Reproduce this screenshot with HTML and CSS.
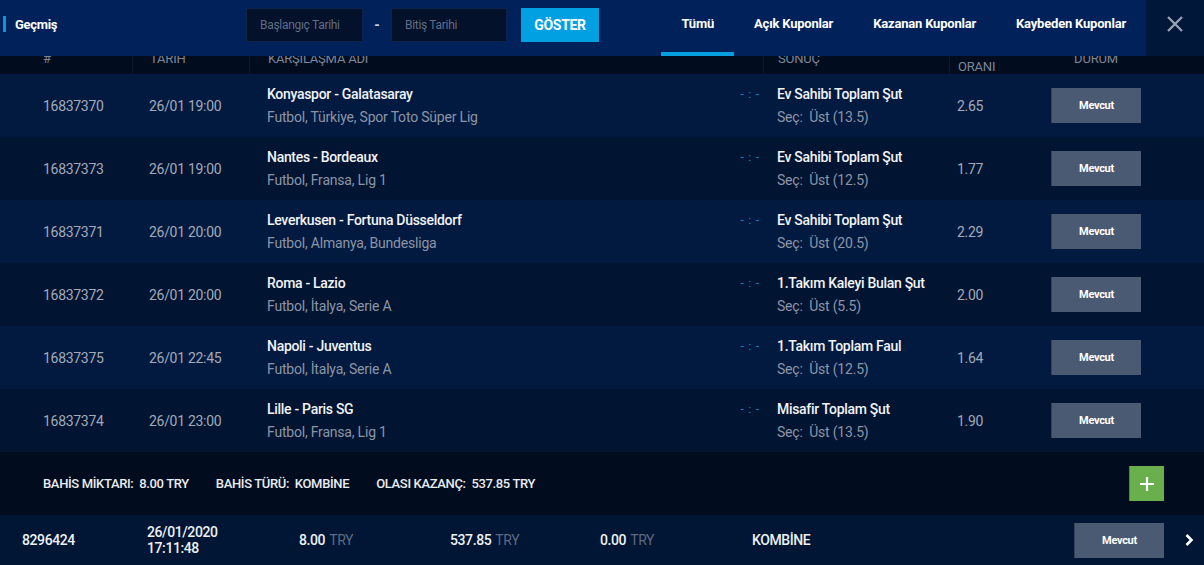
FILE: index.html
```html
<!DOCTYPE html>
<html lang="tr">
<head>
<meta charset="utf-8">
<title>Geçmiş</title>
<link rel="stylesheet" href="styles.css">
</head>
<body>
<div class="page">
  <header class="topbar">
    <div class="title"><span class="accent"></span><span class="title-text">Geçmiş</span></div>
    <div class="filter">
      <input class="date-input" type="text" placeholder="Başlangıç Tarihi">
      <span class="dash">-</span>
      <input class="date-input" type="text" placeholder="Bitiş Tarihi">
      <button class="btn-show">GÖSTER</button>
    </div>
    <nav class="tabs">
      <a class="tab active">Tümü</a>
      <a class="tab">Açık Kuponlar</a>
      <a class="tab">Kazanan Kuponlar</a>
      <a class="tab">Kaybeden Kuponlar</a>
    </nav>
    <button class="close" aria-label="Kapat">
      <svg width="18" height="18" viewBox="0 0 18 18"><path d="M2 2 L16 16 M16 2 L2 16" stroke="#9aa2b1" stroke-width="2.3" fill="none"/></svg>
    </button>
  </header>

  <section class="table">
    <div class="row head">
      <div class="cell c-id">#</div>
      <div class="cell c-date sep">TARİH</div>
      <div class="cell c-match sep">KARŞILAŞMA ADI</div>
      <div class="cell c-res sep">SONUÇ</div>
      <div class="cell c-odd sep"><span>BAHİS<br>ORANI</span></div>
      <div class="cell c-stat">DURUM</div>
      <div class="cell"></div>
    </div>

    <div class="row odd">
      <div class="cell c-id num">16837370</div>
      <div class="cell c-date num">26/01 19:00</div>
      <div class="cell c-match"><div class="two"><div class="main">Konyaspor - Galatasaray</div><div class="sub">Futbol, Türkiye, Spor Toto Süper Lig</div></div><span class="score">- : -</span></div>
      <div class="cell c-res"><div class="two"><div class="main">Ev Sahibi Toplam Şut</div><div class="sub">Seç:&nbsp; Üst (13.5)</div></div></div>
      <div class="cell c-odd num">2.65</div>
      <div class="cell c-stat"><button class="btn-status">Mevcut</button></div>
      <div class="cell"></div>
    </div>

    <div class="row even">
      <div class="cell c-id num">16837373</div>
      <div class="cell c-date num">26/01 19:00</div>
      <div class="cell c-match"><div class="two"><div class="main">Nantes - Bordeaux</div><div class="sub">Futbol, Fransa, Lig 1</div></div><span class="score">- : -</span></div>
      <div class="cell c-res"><div class="two"><div class="main">Ev Sahibi Toplam Şut</div><div class="sub">Seç:&nbsp; Üst (12.5)</div></div></div>
      <div class="cell c-odd num">1.77</div>
      <div class="cell c-stat"><button class="btn-status">Mevcut</button></div>
      <div class="cell"></div>
    </div>

    <div class="row odd">
      <div class="cell c-id num">16837371</div>
      <div class="cell c-date num">26/01 20:00</div>
      <div class="cell c-match"><div class="two"><div class="main">Leverkusen - Fortuna Düsseldorf</div><div class="sub">Futbol, Almanya, Bundesliga</div></div><span class="score">- : -</span></div>
      <div class="cell c-res"><div class="two"><div class="main">Ev Sahibi Toplam Şut</div><div class="sub">Seç:&nbsp; Üst (20.5)</div></div></div>
      <div class="cell c-odd num">2.29</div>
      <div class="cell c-stat"><button class="btn-status">Mevcut</button></div>
      <div class="cell"></div>
    </div>

    <div class="row even">
      <div class="cell c-id num">16837372</div>
      <div class="cell c-date num">26/01 20:00</div>
      <div class="cell c-match"><div class="two"><div class="main">Roma - Lazio</div><div class="sub">Futbol, İtalya, Serie A</div></div><span class="score">- : -</span></div>
      <div class="cell c-res"><div class="two"><div class="main">1.Takım Kaleyi Bulan Şut</div><div class="sub">Seç:&nbsp; Üst (5.5)</div></div></div>
      <div class="cell c-odd num">2.00</div>
      <div class="cell c-stat"><button class="btn-status">Mevcut</button></div>
      <div class="cell"></div>
    </div>

    <div class="row odd">
      <div class="cell c-id num">16837375</div>
      <div class="cell c-date num">26/01 22:45</div>
      <div class="cell c-match"><div class="two"><div class="main">Napoli - Juventus</div><div class="sub">Futbol, İtalya, Serie A</div></div><span class="score">- : -</span></div>
      <div class="cell c-res"><div class="two"><div class="main">1.Takım Toplam Faul</div><div class="sub">Seç:&nbsp; Üst (12.5)</div></div></div>
      <div class="cell c-odd num">1.64</div>
      <div class="cell c-stat"><button class="btn-status">Mevcut</button></div>
      <div class="cell"></div>
    </div>

    <div class="row even">
      <div class="cell c-id num">16837374</div>
      <div class="cell c-date num">26/01 23:00</div>
      <div class="cell c-match"><div class="two"><div class="main">Lille - Paris SG</div><div class="sub">Futbol, Fransa, Lig 1</div></div><span class="score">- : -</span></div>
      <div class="cell c-res"><div class="two"><div class="main">Misafir Toplam Şut</div><div class="sub">Seç:&nbsp; Üst (13.5)</div></div></div>
      <div class="cell c-odd num">1.90</div>
      <div class="cell c-stat"><button class="btn-status">Mevcut</button></div>
      <div class="cell"></div>
    </div>
  </section>

  <div class="summary">
    <div class="sum-items">
      <span class="sum-item">BAHİS MİKTARI:&nbsp; 8.00 TRY</span>
      <span class="sum-item">BAHİS TÜRÜ:&nbsp; KOMBİNE</span>
      <span class="sum-item">OLASI KAZANÇ:&nbsp; 537.85 TRY</span>
    </div>
    <button class="btn-plus" aria-label="Ekle">
      <svg width="16" height="16" viewBox="0 0 16 16"><path d="M8 1 V15 M1 8 H15" stroke="#ffffff" stroke-width="2.2" fill="none"/></svg>
    </button>
  </div>

  <div class="coupon">
    <div class="k-cell k-id">8296424</div>
    <div class="k-cell k-date">26/01/2020<br>17:11:48</div>
    <div class="k-cell">8.00 <span class="cur">TRY</span></div>
    <div class="k-cell">537.85 <span class="cur">TRY</span></div>
    <div class="k-cell">0.00 <span class="cur">TRY</span></div>
    <div class="k-cell">KOMBİNE</div>
    <div class="k-cell k-btn"><button class="btn-status">Mevcut</button></div>
    <div class="k-cell k-arrow">
      <svg width="10" height="14" viewBox="0 0 10 14"><path d="M2.5 2 L7.5 7 L2.5 12" stroke="#ffffff" stroke-width="2.6" fill="none"/></svg>
    </div>
  </div>
</div>
</body>
</html>
```

FILE: styles.css
```css
* { box-sizing: border-box; }

html, body {
  margin: 0;
  padding: 0;
}

body {
  width: 1204px;
  height: 565px;
  overflow: hidden;
  background: #011535;
  font-family: Roboto, "Liberation Sans", Arial, sans-serif;
  color: #eef1f5;
}

.page {
  display: flex;
  flex-direction: column;
}

/* ---------- top bar ---------- */
.topbar {
  display: flex;
  align-items: flex-start;
  flex: 0 0 56px;
  height: 56px;
  background: #00215a;
}

.title {
  flex: 0 0 246px;
  display: flex;
  align-items: center;
  height: 48px;
}

.accent {
  width: 3px;
  height: 16px;
  margin-left: 3px;
  background: #0a95dc;
}

.title-text {
  margin-left: 9px;
  font-size: 13px;
  font-weight: 700;
  letter-spacing: -0.3px;
  color: #ffffff;
}

.filter {
  display: flex;
  align-items: center;
  margin-top: 8px;
}

.date-input {
  width: 117px;
  height: 34px;
  padding: 0 0 0 13px;
  border: 1px solid #0e2348;
  background: #03112a;
  color: #c0c7d3;
  font-family: inherit;
  font-size: 12px;
  letter-spacing: -0.3px;
  outline: none;
}

.date-input + .dash + .date-input { width: 116px; }

.date-input::placeholder { color: #5f6d88; }

.dash {
  width: 28px;
  text-align: center;
  font-size: 14px;
  font-weight: 700;
  color: #d3d8e0;
}

.btn-show {
  width: 78px;
  height: 34px;
  margin-left: 14px;
  border: 0;
  background: #01a0e2;
  color: #ffffff;
  font-family: inherit;
  font-size: 14px;
  font-weight: 700;
  letter-spacing: -0.3px;
}

.tabs {
  display: flex;
  margin-left: auto;
}

.tab {
  display: block;
  height: 56px;
  padding: 0 20px 4px;
  line-height: 48px;
  border-bottom: 4px solid transparent;
  font-size: 13px;
  font-weight: 700;
  letter-spacing: -0.2px;
  color: #ffffff;
  white-space: nowrap;
}

.tab.active { border-bottom-color: #06a0e0; }

.close {
  flex: 0 0 58px;
  height: 56px;
  padding: 0 0 8px;
  border: 0;
  background: #011739;
  display: flex;
  align-items: center;
  justify-content: center;
}

/* ---------- table ---------- */
.row {
  display: grid;
  grid-template-columns: 132px 117px 514px 186px 82px 130px 1fr;
  grid-template-rows: 63px;
  height: 63px;
}

/* header row is scrolled under the top bar: only its lower part shows */
.row.head {
  grid-template-rows: 18px;
  height: 18px;
  overflow: hidden;
  background: #020c1f;
  font-size: 13px;
  color: #7c879a;
  letter-spacing: -0.2px;
}

.row.head .cell {
  min-height: 0;
  line-height: 16px;
  padding-bottom: 13px;
  white-space: nowrap;
}

.row.head .sep { border-left: 1px solid #0b1a33; }

.row.odd { background: #021a40; }
.row.even { background: #011432; }

.cell {
  display: flex;
  align-items: center;
  min-width: 0;
}

.c-id { padding-left: 43px; }
.c-date { padding-left: 17px; }
.c-match { padding-left: 18px; padding-right: 3px; justify-content: space-between; align-items: center; }
.c-res { padding-left: 14px; }
.c-odd { padding-left: 8px; }
.c-stat { justify-content: center; }

.num {
  font-size: 14px;
  color: #a2aaba;
  letter-spacing: -0.3px;
}

.two {
  display: flex;
  flex-direction: column;
  gap: 3px;
  white-space: nowrap;
}

.main {
  line-height: 20px;
  font-size: 14px;
  font-weight: 500;
  color: #f1f3f7;
  letter-spacing: -0.3px;
}

.sub {
  line-height: 20px;
  font-size: 14px;
  color: #8c95a7;
  letter-spacing: -0.2px;
}

.score {
  align-self: flex-start;
  margin-top: 11px;
  line-height: 20px;
  font-size: 11px;
  color: #0e97e0;
  letter-spacing: 1px;
  white-space: nowrap;
}

.btn-status {
  width: 90px;
  height: 35px;
  border: 0;
  border-left: 1px solid #34425a;
  background: #4a5a73;
  color: #ffffff;
  font-family: inherit;
  font-size: 11px;
  font-weight: 700;
  letter-spacing: -0.3px;
}

/* ---------- summary ---------- */
.summary {
  display: flex;
  align-items: center;
  flex: 0 0 63px;
  height: 63px;
  padding: 0 40px 0 43px;
  background: #010c1f;
}

.sum-items {
  display: flex;
  gap: 27px;
}

.sum-item {
  font-size: 13px;
  font-weight: 500;
  color: #e9ecf1;
  letter-spacing: -0.35px;
  white-space: nowrap;
}

.btn-plus {
  margin-left: auto;
  width: 35px;
  height: 35px;
  border: 0;
  border-left: 1px solid #4e8a3b;
  background: #69b04d;
  display: flex;
  align-items: center;
  justify-content: center;
}

/* ---------- coupon row ---------- */
.coupon {
  display: grid;
  grid-template-columns: 147px 152px 151px 150px 152px 1fr 90px 40px;
  height: 50px;
  background: #011535;
}

.k-cell {
  display: flex;
  align-items: center;
  font-size: 14px;
  font-weight: 500;
  color: #eef1f5;
  letter-spacing: -0.4px;
  white-space: nowrap;
}

.k-id { padding-left: 22px; }

.k-date { line-height: 16px; }

.cur {
  margin-left: 4px;
  font-weight: 400;
  color: #5d6a82;
}

.k-btn { justify-content: center; }

.k-arrow { justify-content: center; padding-left: 10px; }
```
